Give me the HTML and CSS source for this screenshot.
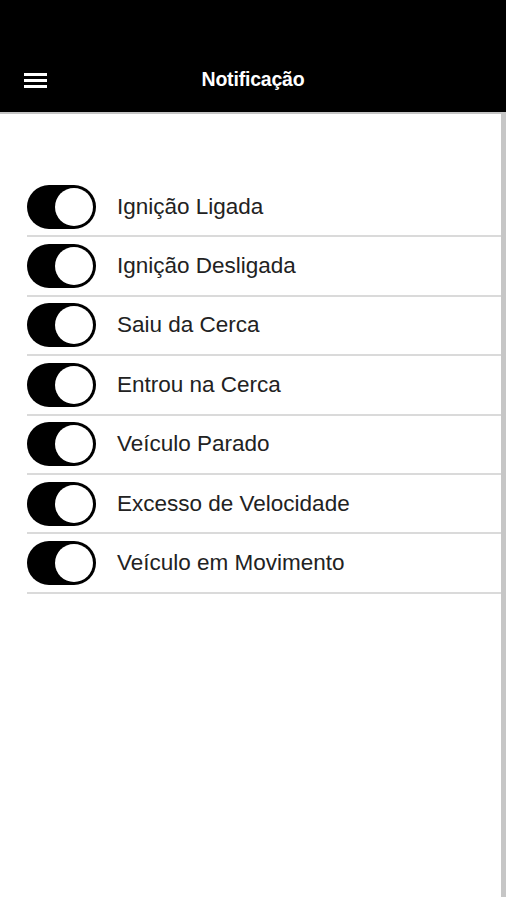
FILE: index.html
```html
<!DOCTYPE html>
<html lang="pt">
<head>
<meta charset="utf-8">
<link rel="stylesheet" href="styles.css">
</head>
<body>
<header class="topbar">
  <svg class="menu" width="24" height="16" viewBox="0 0 24 16"><rect x="0" y="0" width="23" height="3" fill="#fff"/><rect x="0" y="6" width="23" height="3" fill="#fff"/><rect x="0" y="12" width="23" height="3" fill="#fff"/></svg>
  <h1 class="title">Notificação</h1>
</header>
<main class="content">
  <ul class="list">
    <li class="row"><span class="toggle"><span class="knob"></span></span><span class="label">Ignição Ligada</span></li>
    <li class="row"><span class="toggle"><span class="knob"></span></span><span class="label">Ignição Desligada</span></li>
    <li class="row"><span class="toggle"><span class="knob"></span></span><span class="label">Saiu da Cerca</span></li>
    <li class="row"><span class="toggle"><span class="knob"></span></span><span class="label">Entrou na Cerca</span></li>
    <li class="row"><span class="toggle"><span class="knob"></span></span><span class="label">Veículo Parado</span></li>
    <li class="row"><span class="toggle"><span class="knob"></span></span><span class="label">Excesso de Velocidade</span></li>
    <li class="row"><span class="toggle"><span class="knob"></span></span><span class="label">Veículo em Movimento</span></li>
  </ul>
  <div class="scrollbar"></div>
</main>
</body>
</html>
```
FILE: styles.css
```css
html, body {
  margin: 0;
  padding: 0;
  background: #fff;
  font-family: "Liberation Sans", Arial, sans-serif;
}
.topbar {
  background: #000;
  border-bottom: 2px solid #c4c4c4;
  position: relative;
  display: flex;
  align-items: center;
  justify-content: center;
  padding-top: 47px;
  height: 65px;
}
.menu {
  position: absolute;
  left: 24px;
  top: 73px;
}
.title {
  margin: 0;
  color: #fff;
  font-size: 19.5px;
  font-weight: bold;
  letter-spacing: -0.2px;
}
.content {
  position: relative;
  height: 722px;
  padding: 64px 0 0 27px;
}
.list {
  list-style: none;
  margin: 0;
  padding: 0;
}
.row {
  height: 57.4px;
  display: flex;
  align-items: center;
  border-bottom: 2px solid #dadada;
}
.toggle {
  width: 69px;
  height: 44px;
  border-radius: 22px;
  background: #000;
  position: relative;
  flex: none;
}
.knob {
  position: absolute;
  right: 3px;
  top: 3px;
  width: 38px;
  height: 38px;
  border-radius: 50%;
  background: #fff;
}
.label {
  margin-left: 21px;
  font-size: 22.5px;
  color: #222;
}
.scrollbar {
  position: absolute;
  right: 0;
  top: 0;
  width: 5px;
  height: 783px;
  background: #c6c6c6;
}
```
